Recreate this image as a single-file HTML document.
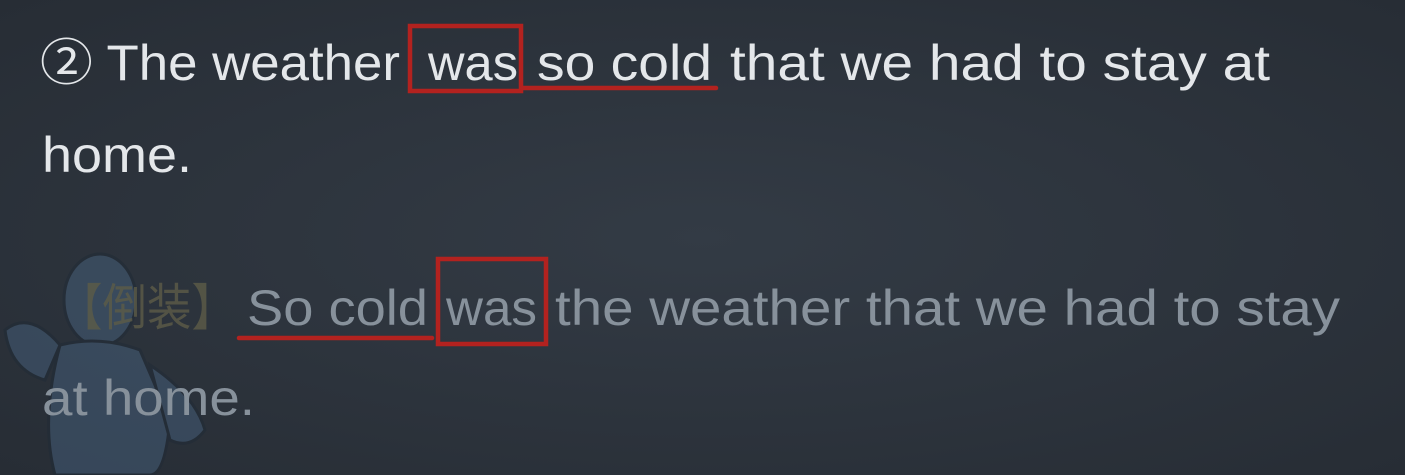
<!DOCTYPE html>
<html><head><style>
html,body{margin:0;padding:0;width:1405px;height:475px;overflow:hidden;background:#2d343d;}
svg{display:block}
text{font-family:"Liberation Sans","Noto Sans CJK SC",sans-serif;font-size:50px}
</style></head><body>
<svg width="1405" height="475" viewBox="0 0 1405 475">
<defs><radialGradient id="g" cx="0.5" cy="0.5" r="0.7"><stop offset="0" stop-color="#333b45"/><stop offset="1" stop-color="#272d35"/></radialGradient></defs>
<rect width="1405" height="475" fill="url(#g)"/>
<g opacity="0.45" fill="#4a6786" stroke="#1e2a36" stroke-width="3">
<ellipse cx="100" cy="300" rx="36" ry="46"/>
<path d="M60 345 Q100 335 140 350 L170 420 Q165 475 150 475 L55 475 Q40 420 60 345Z"/>
<path d="M5 330 Q30 310 60 345 L45 380 Q10 370 5 330Z"/>
<path d="M150 365 Q195 395 205 430 Q190 450 170 440 Z"/>
</g>
<g fill="#e4e7ea">
<text x="40" y="80" textLength="360" lengthAdjust="spacingAndGlyphs">② The weather</text>
<text x="428" y="80" textLength="90" lengthAdjust="spacingAndGlyphs">was</text>
<text x="537" y="80" textLength="175" lengthAdjust="spacingAndGlyphs">so cold</text>
<text x="730" y="80" textLength="540" lengthAdjust="spacingAndGlyphs">that we had to stay at</text>
<text x="42" y="172" textLength="150" lengthAdjust="spacingAndGlyphs">home.</text>
</g>
<g fill="#87919b">
<text x="58" y="325" textLength="178" lengthAdjust="spacingAndGlyphs" fill="#5d5c48" opacity="0.8">【倒装】</text>
<text x="247" y="325" textLength="181" lengthAdjust="spacingAndGlyphs">So cold</text>
<text x="446" y="325" textLength="91" lengthAdjust="spacingAndGlyphs">was</text>
<text x="555" y="325" textLength="785" lengthAdjust="spacingAndGlyphs">the weather that we had to stay</text>
<text x="42" y="415" textLength="213" lengthAdjust="spacingAndGlyphs">at home.</text>
</g>
<g fill="none" stroke="#b3221f" stroke-width="4.5" stroke-linecap="round">
<rect x="410" y="26" width="111" height="65"/>
<line x1="522" y1="88" x2="716" y2="88"/>
<rect x="438" y="259" width="108" height="85"/>
<line x1="239" y1="338" x2="432" y2="338"/>
</g>
</svg>
</body></html>
